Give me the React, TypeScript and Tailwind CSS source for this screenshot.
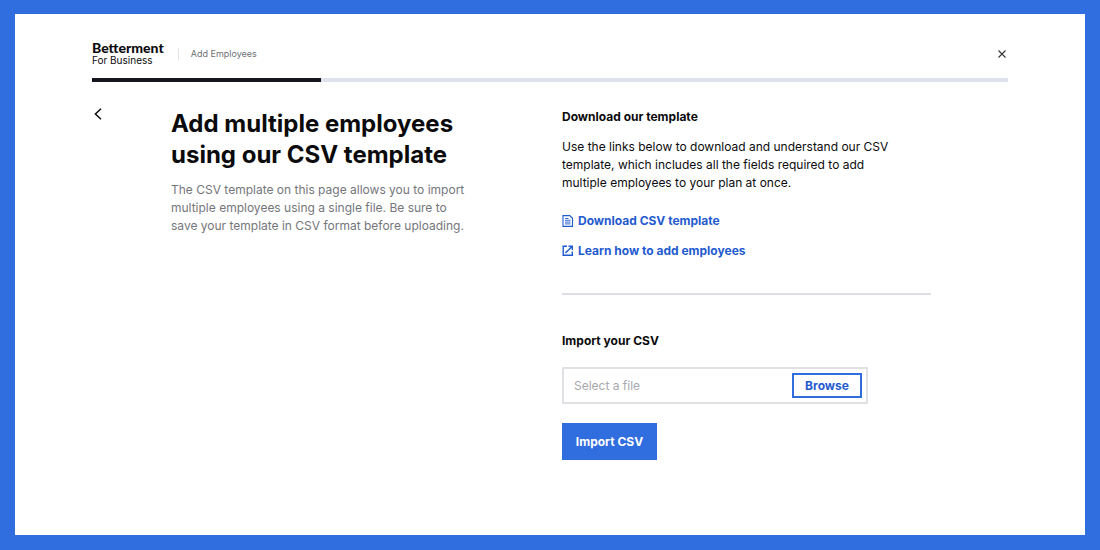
import { useRef, useState } from "react";

function DocumentIcon() {
  return (
    <svg className="h-3 w-3 shrink-0" viewBox="0 0 12 12" fill="none" stroke="currentColor" aria-hidden="true">
      <path d="M1 .6h6.8l2.7 2.7v8.1H1z" strokeWidth="1.1" />
      <path d="M3 3.5h3.5M3 5.3h5.5M3 7.1h5.5M3 8.9h5.5" strokeWidth="0.9" />
    </svg>
  );
}

function ExternalIcon() {
  return (
    <svg className="h-3 w-3 shrink-0" viewBox="0 0 12 12" fill="none" stroke="currentColor" aria-hidden="true">
      <path d="M5 1.2H1.2v9.1h9.1V6.5" strokeWidth="1.4" />
      <path d="M6.5 1.2h3.8V5M10.1 1.4 3.4 8.1" strokeWidth="1.4" />
    </svg>
  );
}

export default function App() {
  const picker = useRef<HTMLInputElement>(null);
  const [fileName, setFileName] = useState("");

  return (
    <div className="flex min-h-screen bg-[#306ddf] p-[15px] pt-[14px] font-['Inter','Liberation_Sans',sans-serif] text-xs leading-[18px] text-[#0b0b0d]">
      <div className="flex-1 bg-white px-[77px] pt-7 pb-12">
        <header className="flex h-6 items-center">
          <div className="leading-3">
            <div className="font-['Lato',sans-serif] text-sm leading-3 font-black">Betterment</div>
            <div className="text-[10px] leading-3">For Business</div>
          </div>
          <div className="ml-3.5 h-3 w-px bg-[#e3e5ea]" />
          <div className="ml-3 text-[9px] leading-3 text-[#6f7176]">Add Employees</div>
          <button type="button" aria-label="Close" className="ml-auto p-0.5 text-[#333]">
            <svg className="h-2 w-2" viewBox="0 0 8 8" fill="none" stroke="currentColor" aria-hidden="true">
              <path d="m.5.5 7 7m0-7-7 7" strokeWidth="1.1" />
            </svg>
          </button>
        </header>

        <div className="mt-3 h-1 bg-[#dfe2ea]" role="progressbar" aria-label="Progress" aria-valuenow={25}>
          <div className="h-full w-1/4 bg-[#15151f]" />
        </div>

        <main className="mt-6 grid grid-cols-[79px_391fr_369fr_77px]">
          <div>
            <button type="button" aria-label="Back" className="block p-0.5">
              <svg className="h-3 w-2" viewBox="0 0 8 12" fill="none" stroke="currentColor" aria-hidden="true">
                <path d="M7 .7 1.4 6 7 11.3" strokeWidth="1.5" />
              </svg>
            </button>
          </div>

          <section>
            <h1 className="mt-0.5 max-w-[320px] text-2xl leading-[31px] font-bold">
              Add multiple employees
              <br />
              using our CSV template
            </h1>
            <p className="mt-[11px] max-w-[300px] text-[#74767b]">
              The CSV template on this page allows you to import
              <br />
              multiple employees using a single file. Be sure to
              <br />
              save your template in CSV format before uploading.
            </p>
          </section>

          <section>
            <h2 className="mt-0.5 font-bold">Download our template</h2>
            <p className="mt-3">
              Use the links below to download and understand our CSV
              <br />
              template, which includes all the fields required to add
              <br />
              multiple employees to your plan at once.
            </p>
            <div className="mt-5 flex flex-col items-start gap-3 font-bold text-[#1f5bcf]">
              <a href="#template" className="flex items-center gap-1">
                <DocumentIcon />
                Download CSV template
              </a>
              <a href="#guide" className="flex items-center gap-1">
                <ExternalIcon />
                Learn how to add employees
              </a>
            </div>
            <hr className="mt-[33px] border-t-2 border-[#dddee3]" />
            <h2 className="mt-[37px] font-bold">
              <label htmlFor="csv-name">Import your CSV</label>
            </h2>
            <div className="mt-[17px] flex h-[37px] max-w-[306px] items-center border-2 border-[#e0e1e5] pr-1 pl-2.5">
              <input
                id="csv-name"
                type="text"
                readOnly
                value={fileName}
                placeholder="Select a file"
                className="min-w-0 flex-1 outline-none placeholder:text-[#a6a8ae]"
              />
              <input
                ref={picker}
                type="file"
                accept=".csv"
                aria-label="CSV file"
                className="hidden"
                onChange={(event) => setFileName(event.target.files?.[0]?.name ?? "")}
              />
              <button
                type="button"
                onClick={() => picker.current?.click()}
                className="h-[25px] w-[70px] border-2 border-[#306ddf] font-bold text-[#1f5bcf]"
              >
                Browse
              </button>
            </div>
            <button type="button" className="mt-[19px] h-[37px] w-[95px] bg-[#306ddf] font-bold text-white">
              Import CSV
            </button>
          </section>
        </main>
      </div>
    </div>
  );
}
